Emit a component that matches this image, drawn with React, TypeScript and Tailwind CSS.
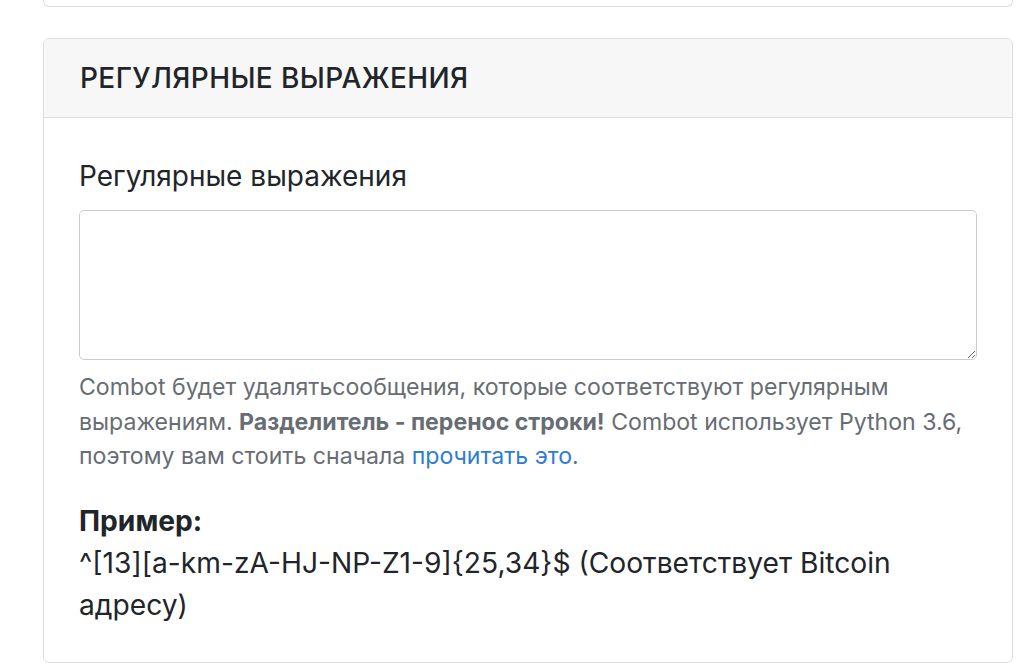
const App = () => {
  return (
    <div
      className="min-h-screen bg-white"
      style={{ fontFamily: "Inter, 'Noto Sans', sans-serif" }}
    >
      {/* Previous card (only the bottom edge is visible) */}
      <div className="ml-[43px] h-[7px] w-[970px] rounded-b-[6px] border-x border-b border-[#dfdfdf]" />

      {/* Regex card */}
      <div className="ml-[43px] mt-[31px] w-[970px] overflow-hidden rounded-[6px] border border-[#dfdfdf]">
        {/* Header */}
        <div className="flex h-[79px] items-center border-b border-[#dfdfdf] bg-[#f7f7f7] px-[36px]">
          <h2 className="text-[28px] font-medium tracking-[0.4px] text-[#212529]">
            РЕГУЛЯРНЫЕ ВЫРАЖЕНИЯ
          </h2>
        </div>

        {/* Body */}
        <div className="px-[35px] pb-[36px] pt-[39px] text-[#212529]">
          <label className="block text-[28px] leading-[38px]">
            Регулярные выражения
          </label>

          <textarea className="mt-[15px] block h-[150px] w-full resize-y rounded-[5px] border border-[#c9cdd2] bg-white px-3 py-2 text-[22px] outline-none" />

          {/* Help text */}
          <p className="mt-[10px] whitespace-nowrap text-[23.1px] leading-[34.5px] text-[#676d73]">
            Combot будет удалятьсообщения, которые соответствуют регулярным
            <br />
            выражениям. <b className="font-bold">Разделитель - перенос строки!</b>{" "}
            Combot использует Python 3.6,
            <br />
            поэтому вам стоить сначала{" "}
            <a href="#" className="text-[#2d7cd6]">
              прочитать это
            </a>
            .
          </p>

          {/* Example */}
          <div className="mt-[26px] text-[28.2px] leading-[42px]">
            <b className="block font-bold">Пример:</b>
            <span>
              ^[13][a-km-zA-HJ-NP-Z1-9]{"{25,34}"}$ (Соответствует Bitcoin
              <br />
              адресу)
            </span>
          </div>
        </div>
      </div>
    </div>
  );
};

export default App;
